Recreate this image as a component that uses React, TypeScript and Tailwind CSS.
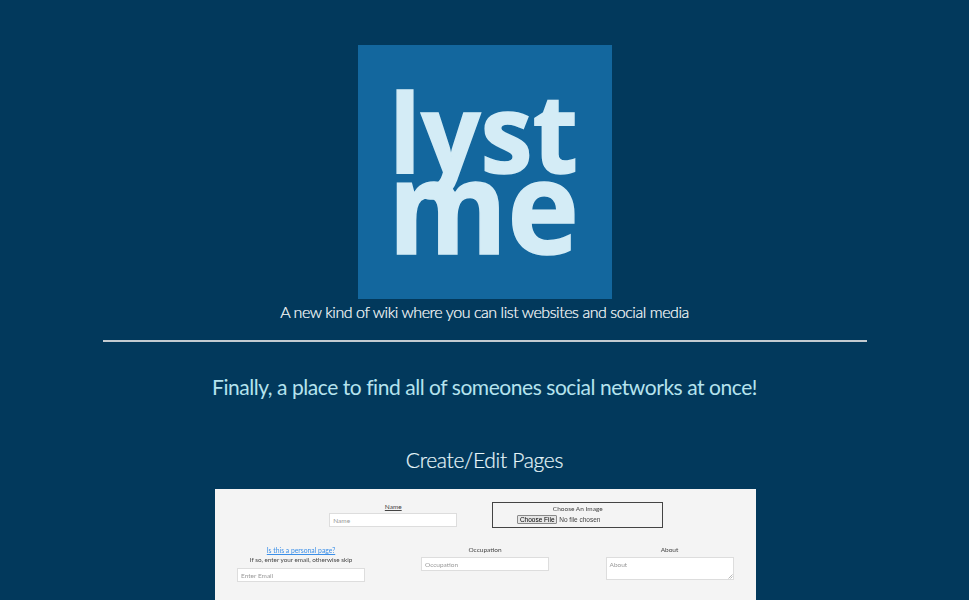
import React from 'react';

const Logo: React.FC = () => (
  <svg width="254" height="254" viewBox="0 0 254 254" className="block flex-none" role="img" aria-label="lyst me">
    <rect width="254" height="254" fill="#13679e" />
    <g
      fill="#d4ecf6"
      stroke="#d4ecf6"
      strokeWidth="1.5"
      style={{ fontFamily: '"Open Sans", sans-serif', fontWeight: 700 }}
    >
      <text x="31" y="128" fontSize="109" textLength="189" lengthAdjust="spacingAndGlyphs">lyst</text>
      <text x="30" y="209" fontSize="130" textLength="191" lengthAdjust="spacingAndGlyphs">me</text>
    </g>
  </svg>
);

const inputClass =
  'w-[128px] h-[14px] bg-white border border-[#dddddd] px-[3px] text-[6.5px] outline-none placeholder:text-[#999999]';

const App: React.FC = () => {
  return (
    <div className="h-screen overflow-hidden bg-[#02395c] font-['Lato',sans-serif] flex flex-col items-center pt-[45px]">
      <Logo />
      <p className="flex-none mt-[1px] text-[16px] leading-[24px] font-light tracking-[-0.44px] text-white [-webkit-text-stroke:0.2px_white]">
        A new kind of wiki where you can list websites and social media
      </p>
      <hr className="flex-none mt-[16px] w-[764px] h-[2px] border-0 bg-[#c3cbd1]" />
      <h2 className="flex-none mt-[30px] text-[21px] leading-[30px] tracking-[-0.45px] text-[#b5e3ee] font-normal">
        Finally, a place to find all of someones social networks at once!
      </h2>
      <h3 className="flex-none mt-[43px] text-[21px] leading-[30px] tracking-[-0.3px] font-light text-[#e6f6fa] [-webkit-text-stroke:0.2px_#e6f6fa]">
        Create/Edit Pages
      </h3>

      <div className="mt-[14px] ml-[2px] w-[541px] flex-none h-[200px] bg-[#f4f4f4] text-[#444444] text-[6.5px] leading-[9px] blur-[0.3px]">
        <div className="flex justify-center pt-[13px]">
          <div className="w-[184.5px] flex-none flex flex-col items-center">
            <label className="underline">Name</label>
            <input className={`${inputClass} mt-[2px]`} placeholder="Name" />
          </div>
          <div className="w-[184.5px] flex-none flex flex-col items-center">
            <div className="w-[171px] h-[26px] border border-[#444444] flex flex-col items-center pt-[1px]">
              <span>Choose An Image</span>
              <div className="self-start ml-[24px] flex items-center mt-[2px] font-['Liberation_Sans',sans-serif]">
                <button className="w-[40px] h-[9px] bg-[#e6e6e6] border border-[#8a8a8a] rounded-[1px] text-black text-[6.5px] leading-[7px]">
                  Choose File
                </button>
                <span className="ml-[2px]">No file chosen</span>
              </div>
            </div>
          </div>
        </div>

        <div className="flex justify-center mt-[18px]">
          <div className="w-[184px] flex-none flex flex-col items-center">
            <a className="underline text-[#3b8fe8] text-[6.8px]">Is this a personal page?</a>
            <span className="text-[6.3px]">If so, enter your email, otherwise skip</span>
            <input className={`${inputClass} mt-[4px]`} placeholder="Enter Email" />
          </div>
          <div className="w-[184px] flex-none flex flex-col items-center">
            <label className="-mt-[1px]">Occupation</label>
            <input className={`${inputClass} mt-[3px]`} placeholder="Occupation" />
          </div>
          <div className="w-[185px] flex-none flex flex-col items-center">
            <label className="-mt-[1px]">About</label>
            <div className="relative mt-[3px] w-[128px] h-[23px]">
              <textarea
                className="block w-full h-full resize-none bg-white border border-[#dddddd] px-[3px] py-[2px] text-[6.5px] outline-none placeholder:text-[#999999]"
                placeholder="About"
              />
              <svg width="5" height="5" viewBox="0 0 5 5" className="absolute right-[1px] bottom-[1px]">
                <path d="M0.5 4.5 L4.5 0.5 M2.5 4.5 L4.5 2.5" stroke="#888888" strokeWidth="0.6" />
              </svg>
            </div>
          </div>
        </div>
      </div>
    </div>
  );
};

export default App;
